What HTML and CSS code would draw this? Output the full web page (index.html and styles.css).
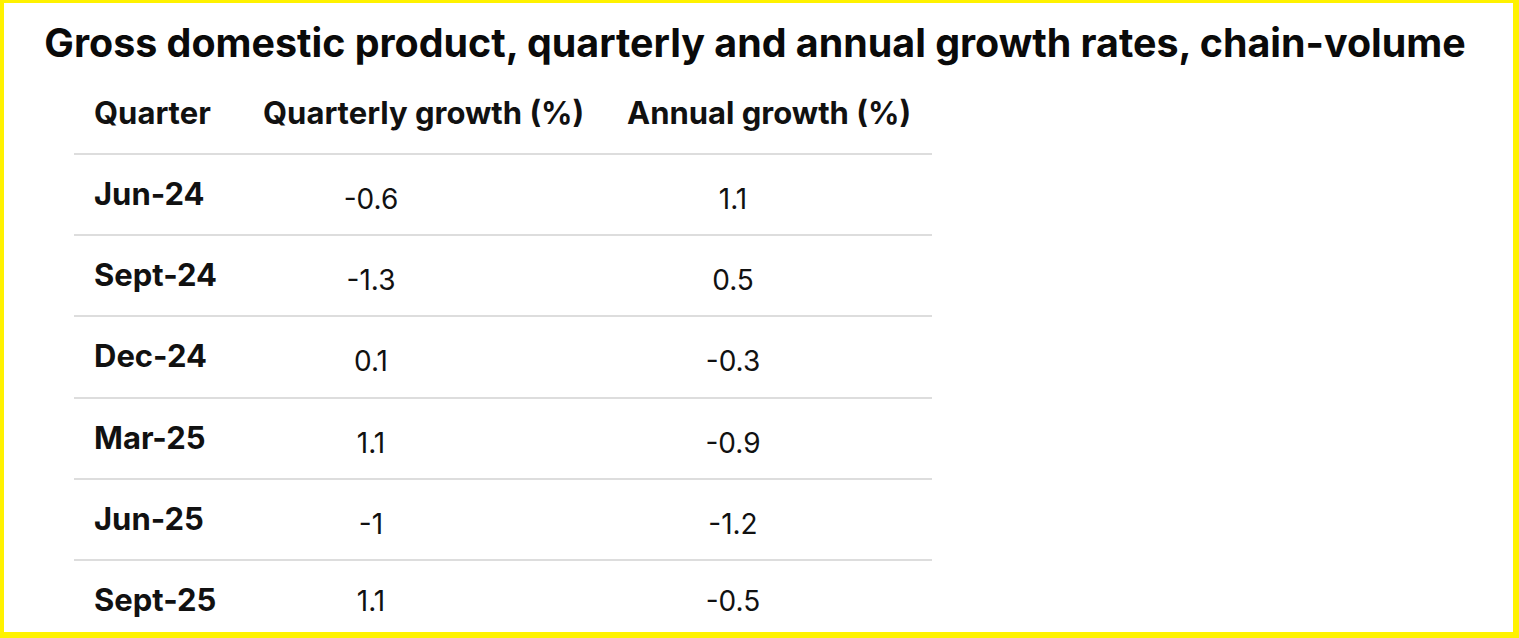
FILE: index.html
```html
<!DOCTYPE html>
<html>
<head>
<meta charset="utf-8">
<link rel="stylesheet" href="styles.css">
</head>
<body>
<div class="frame">
  <h1 class="title">Gross domestic product, quarterly and annual growth rates, chain-volume</h1>
  <div class="table">
    <div class="row head">
      <div class="cell label">Quarter</div>
      <div class="cell hcol">Quarterly growth (%)</div>
      <div class="cell hcol">Annual growth (%)</div>
    </div>
    <div class="row">
      <div class="cell label">Jun-24</div>
      <div class="cell q"><span class="val">-0.6</span></div>
      <div class="cell a"><span class="val">1.1</span></div>
    </div>
    <div class="row">
      <div class="cell label">Sept-24</div>
      <div class="cell q"><span class="val">-1.3</span></div>
      <div class="cell a"><span class="val">0.5</span></div>
    </div>
    <div class="row">
      <div class="cell label">Dec-24</div>
      <div class="cell q"><span class="val">0.1</span></div>
      <div class="cell a"><span class="val">-0.3</span></div>
    </div>
    <div class="row">
      <div class="cell label">Mar-25</div>
      <div class="cell q"><span class="val">1.1</span></div>
      <div class="cell a"><span class="val">-0.9</span></div>
    </div>
    <div class="row">
      <div class="cell label">Jun-25</div>
      <div class="cell q"><span class="val">-1</span></div>
      <div class="cell a"><span class="val">-1.2</span></div>
    </div>
    <div class="row last">
      <div class="cell label">Sept-25</div>
      <div class="cell q up"><span class="val">1.1</span></div>
      <div class="cell a up"><span class="val">-0.5</span></div>
    </div>
  </div>
</div>
</body>
</html>
```
FILE: styles.css
```css
html, body {
  margin: 0;
  padding: 0;
  background: #ffffff;
}
.frame {
  box-sizing: border-box;
  width: 1519px;
  height: 638px;
  border-style: solid;
  border-color: #fff200;
  border-width: 3px 6px 6px 4px;
  overflow: hidden;
  font-family: Inter, "Liberation Sans", sans-serif;
  color: #111111;
}
.title {
  margin: 0;
  padding: 17px 7px 0 0;
  text-align: center;
  font-size: 39.4px;
  font-weight: 700;
  line-height: 46px;
  color: #0a0a0a;
  white-space: nowrap;
}
.table {
  margin-left: 70px;
  width: 858px;
}
.row {
  box-sizing: border-box;
  display: grid;
  grid-template-columns: 168px 364px 326px;
  align-items: start;
  height: 81.2px;
  padding-top: 20px;
  border-bottom: 2px solid #dddddd;
}
.row.head {
  height: 89px;
  padding-top: 28px;
}
.row.last {
  border-bottom: none;
}
.cell {
  font-size: 31px;
  line-height: 38px;
}
.label {
  padding-left: 20px;
  font-weight: 700;
}
.hcol {
  padding-left: 21px;
  font-weight: 700;
}
.q {
  padding-left: 79px;
  padding-top: 4px;
}
.a {
  padding-left: 77px;
  padding-top: 4px;
}
.q.up,
.a.up {
  padding-top: 0;
}
.val {
  display: inline-block;
  width: 100px;
  text-align: center;
  font-size: 28px;
  font-weight: 400;
}
```
